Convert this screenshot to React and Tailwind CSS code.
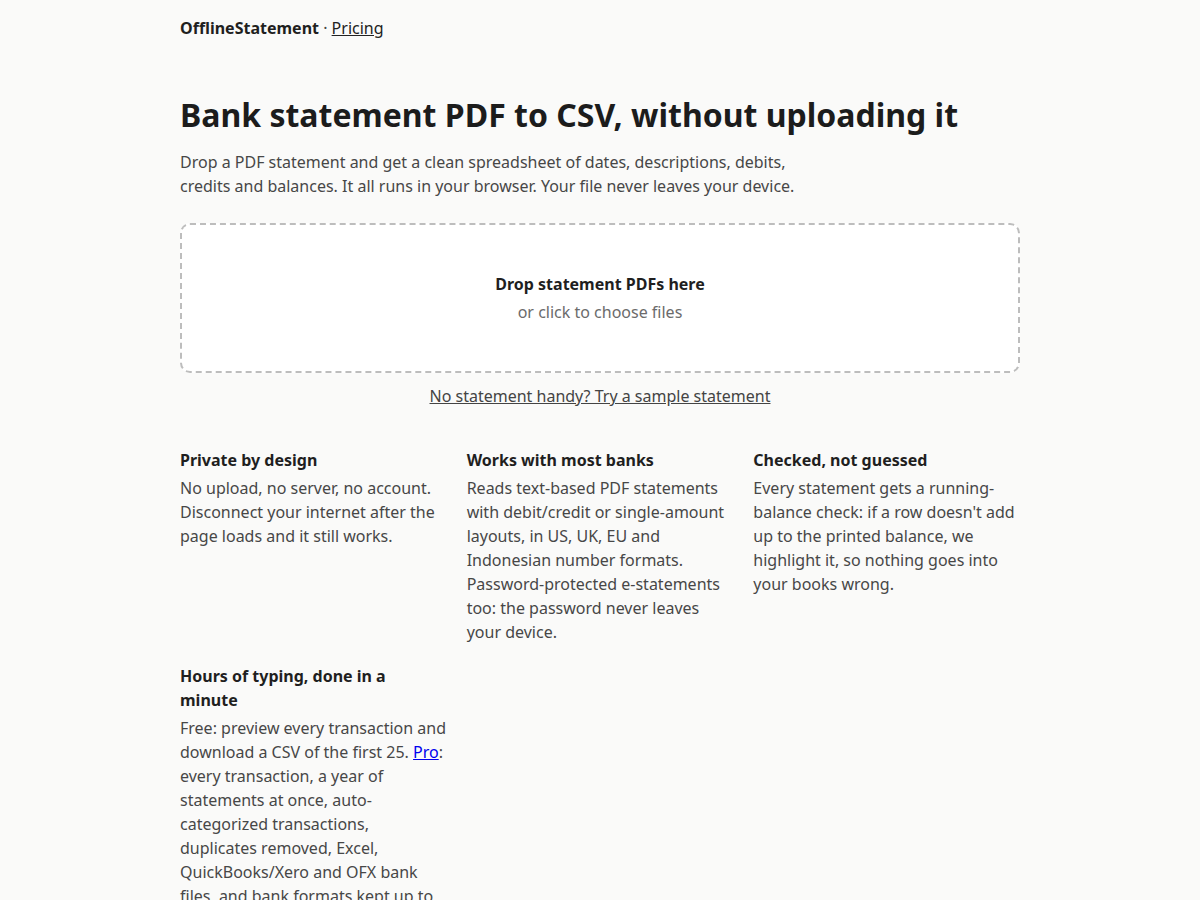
export default function App() {
  const features = [
    {
      title: "Private by design",
      body: "No upload, no server, no account. Disconnect your internet after the page loads and it still works.",
    },
    {
      title: "Works with most banks",
      body: "Reads text-based PDF statements with debit/credit or single-amount layouts, in US, UK, EU and Indonesian number formats. Password-protected e-statements too: the password never leaves your device.",
    },
    {
      title: "Checked, not guessed",
      body: "Every statement gets a running-balance check: if a row doesn't add up to the printed balance, we highlight it, so nothing goes into your books wrong.",
    },
  ];
  return (
    <div className="min-h-screen bg-[#fafaf9] text-[#1f1f1f] [font-family:'Noto_Sans',sans-serif]">
      <div className="mx-auto w-[840px] pt-4 pb-16">
        <header className="text-base leading-6">
          <span className="font-bold">OfflineStatement</span>
          <span className="text-[#444]"> · </span>
          <a href="#" className="underline text-[#222]">Pricing</a>
        </header>
        <h1 className="mt-[56px] text-[32px] leading-[38px] font-bold text-[#1c1c1c]">
          Bank statement PDF to CSV, without uploading it
        </h1>
        <p className="mt-4 max-w-[640px] text-base leading-6 text-[#474747]">
          Drop a PDF statement and get a clean spreadsheet of dates, descriptions, debits, credits and balances. It all runs in your browser. Your file never leaves your device.
        </p>
        <div className="mt-[25px] h-[150px] rounded-[10px] border-2 border-dashed border-[#bdbdbd] bg-white flex flex-col items-center justify-center">
          <div className="text-base leading-6 font-bold text-[#1f1f1f]">Drop statement PDFs here</div>
          <div className="mt-1 text-base leading-6 text-[#6b6b6b]">or click to choose files</div>
        </div>
        <div className="mt-[11px] text-center text-base leading-6">
          <a href="#" className="underline text-[#444]">No statement handy? Try a sample statement</a>
        </div>
        <div className="mt-10 grid grid-cols-3 gap-5">
          {features.map((f) => (
            <div key={f.title}>
              <h3 className="text-base leading-6 font-bold text-[#1f1f1f]">{f.title}</h3>
              <p className="mt-1 text-base leading-6 text-[#474747]">{f.body}</p>
            </div>
          ))}
          <div>
            <h3 className="text-base leading-6 font-bold text-[#1f1f1f]">Hours of typing, done in a minute</h3>
            <p className="mt-1 text-base leading-6 text-[#474747]">
              Free: preview every transaction and download a CSV of the first 25.{" "}
              <a href="#" className="underline text-[#0000ee]">Pro</a>: every transaction, a year of statements at once, auto-categorized transactions, duplicates removed, Excel, QuickBooks/Xero and OFX bank files, and bank formats kept up to date.
            </p>
          </div>
        </div>
      </div>
    </div>
  );
}
